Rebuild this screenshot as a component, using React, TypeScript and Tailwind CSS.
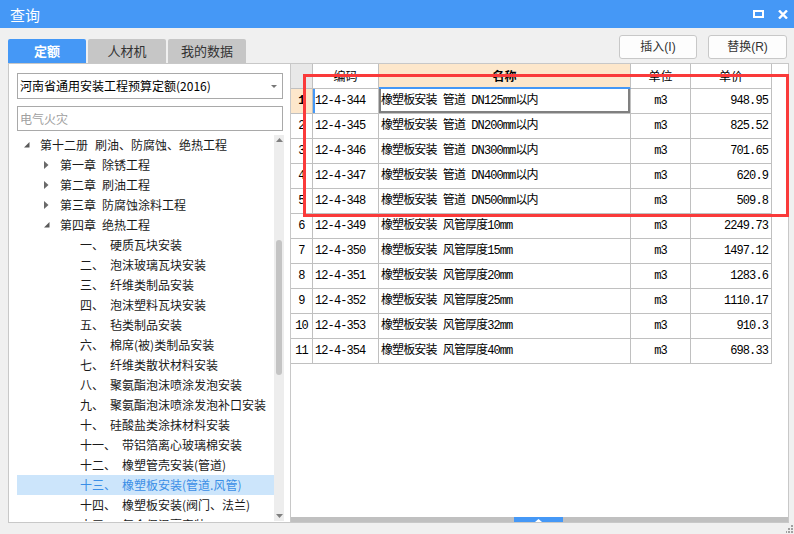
import React from "react";

type TreeItem = {
  level: 0 | 1 | 2;
  label: string;
  name: string;
  icon?: "open" | "closed";
  selected?: boolean;
};

const treeItems: TreeItem[] = [
  { level: 0, label: "第十二册", name: "刷油、防腐蚀、绝热工程", icon: "open" },
  { level: 1, label: "第一章", name: "除锈工程", icon: "closed" },
  { level: 1, label: "第二章", name: "刷油工程", icon: "closed" },
  { level: 1, label: "第三章", name: "防腐蚀涂料工程", icon: "closed" },
  { level: 1, label: "第四章", name: "绝热工程", icon: "open" },
  { level: 2, label: "一、", name: "硬质瓦块安装" },
  { level: 2, label: "二、", name: "泡沫玻璃瓦块安装" },
  { level: 2, label: "三、", name: "纤维类制品安装" },
  { level: 2, label: "四、", name: "泡沫塑料瓦块安装" },
  { level: 2, label: "五、", name: "毡类制品安装" },
  { level: 2, label: "六、", name: "棉席(被)类制品安装" },
  { level: 2, label: "七、", name: "纤维类散状材料安装" },
  { level: 2, label: "八、", name: "聚氨酯泡沫喷涂发泡安装" },
  { level: 2, label: "九、", name: "聚氨酯泡沫喷涂发泡补口安装" },
  { level: 2, label: "十、", name: "硅酸盐类涂抹材料安装" },
  { level: 2, label: "十一、", name: "带铝箔离心玻璃棉安装" },
  { level: 2, label: "十二、", name: "橡塑管壳安装(管道)" },
  { level: 2, label: "十三、", name: "橡塑板安装(管道.风管)", selected: true },
  { level: 2, label: "十四、", name: "橡塑板安装(阀门、法兰)" },
  { level: 2, label: "十五、", name: "复合保温膏安装" },
];

const rows = [
  { code: "12-4-344", name: "橡塑板安装 管道 DN125mm以内", price: "948.95" },
  { code: "12-4-345", name: "橡塑板安装 管道 DN200mm以内", price: "825.52" },
  { code: "12-4-346", name: "橡塑板安装 管道 DN300mm以内", price: "701.65" },
  { code: "12-4-347", name: "橡塑板安装 管道 DN400mm以内", price: "620.9" },
  { code: "12-4-348", name: "橡塑板安装 管道 DN500mm以内", price: "509.8" },
  { code: "12-4-349", name: "橡塑板安装 风管厚度10mm", price: "2249.73" },
  { code: "12-4-350", name: "橡塑板安装 风管厚度15mm", price: "1497.12" },
  { code: "12-4-351", name: "橡塑板安装 风管厚度20mm", price: "1283.6" },
  { code: "12-4-352", name: "橡塑板安装 风管厚度25mm", price: "1110.17" },
  { code: "12-4-353", name: "橡塑板安装 风管厚度32mm", price: "910.3" },
  { code: "12-4-354", name: "橡塑板安装 风管厚度40mm", price: "698.33" },
];

const TreeArrow = ({ kind }: { kind: "open" | "closed" }) =>
  kind === "open" ? (
    <svg width="6" height="6" viewBox="0 0 6 6">
      <polygon points="5.5,0 5.5,5.5 0,5.5" fill="#5a5a5a" />
    </svg>
  ) : (
    <svg width="5" height="8" viewBox="0 0 5 8">
      <polygon points="0,0 4.5,4 0,8" fill="#6a6a6a" />
    </svg>
  );

const App: React.FC = () => {
  return (
    <div className="relative w-[794px] h-[534px] bg-[#f0f0f0] flex flex-col overflow-hidden font-['Noto_Sans_CJK_SC',sans-serif] text-[#1a1a1a]">
      {/* title bar */}
      <div className="h-[28px] shrink-0 bg-[#4598f6] flex items-center justify-between pl-[10px] pr-[6px]">
        <span className="text-white text-[15px] leading-none">查询</span>
        <div className="flex items-center gap-[14px]">
          <svg width="11" height="8" viewBox="0 0 11 8">
            <rect x="1" y="1" width="9" height="6" fill="none" stroke="#fff" strokeWidth="2" />
          </svg>
          <svg width="10" height="9" viewBox="0 0 10 9">
            <path d="M1 0.5 L9 8.5 M9 0.5 L1 8.5" stroke="#fff" strokeWidth="2.4" />
          </svg>
        </div>
      </div>

      {/* body */}
      <div className="flex-1 min-h-0 flex pl-[8px] pr-[5px] pb-[11px]">
        {/* left column */}
        <div className="w-[283px] min-h-0 flex flex-col pt-[11px]">
          <div className="h-[24px] shrink-0 flex gap-[2px]">
            <div className="w-[78px] rounded-t-[2px] bg-[#4598f6] text-white text-[13px] font-bold flex items-center justify-center">
              定额
            </div>
            <div className="w-[78px] rounded-t-[2px] bg-[#c6c6c6] text-[#333] text-[13px] flex items-center justify-center">
              人材机
            </div>
            <div className="w-[78px] rounded-t-[2px] bg-[#c6c6c6] text-[#333] text-[13px] flex items-center justify-center">
              我的数据
            </div>
          </div>
          <div className="flex-1 bg-white border border-[#c8c8c8] flex flex-col pl-[8px] pr-[6px] pt-[9px] pb-[1px] min-h-0">
            <div className="h-[26px] shrink-0 mr-[1px] border border-[#a9a9a9] flex items-center justify-between pl-[2px] pr-[5px] text-[12px] text-black">
              <span>河南省通用安装工程预算定额(2016)</span>
              <svg width="6" height="3" viewBox="0 0 6 3">
                <polygon points="0,0 6,0 3,3" fill="#777" />
              </svg>
            </div>
            <div className="h-[25px] shrink-0 mt-[7px] mr-[1px] border border-[#a9a9a9] flex items-center pl-[2px] text-[12px] text-[#a0a0a0]">
              电气火灾
            </div>
            <div className="flex-1 mt-[4px] flex min-h-0">
              <div className="flex-1 overflow-hidden">
                {treeItems.map((item, i) => {
                  const pad = item.level === 0 ? "pl-[7px]" : item.level === 1 ? "pl-[27px]" : "pl-[63px]";
                  return (
                    <div
                      key={i}
                      className={`h-[20px] flex items-center text-[12px] whitespace-nowrap ${pad} ${
                        item.selected ? "bg-[#cce5fb] text-[#3a8ee6]" : ""
                      }`}
                    >
                      {item.icon && (
                        <span className="w-[16px] flex items-center">
                          <TreeArrow kind={item.icon} />
                        </span>
                      )}
                      <span>{item.label}</span>
                      <span className={item.level === 0 ? "ml-[7px]" : "ml-[6px]"}>{item.name}</span>
                    </div>
                  );
                })}
              </div>
              <div className="w-[10px] bg-[#ededed] flex flex-col items-center">
                <div className="h-[10px] flex items-center justify-center">
                  <svg width="7" height="4" viewBox="0 0 7 4">
                    <polygon points="3.5,0 7,4 0,4" fill="#808080" />
                  </svg>
                </div>
                <div className="h-[95px]" />
                <div className="h-[135px] w-[6px] rounded-[3px] bg-[#c4c4c4]" />
                <div className="flex-1" />
                <div className="h-[10px] flex items-center justify-center">
                  <svg width="7" height="4" viewBox="0 0 7 4">
                    <polygon points="0,0 7,0 3.5,4" fill="#808080" />
                  </svg>
                </div>
              </div>
            </div>
          </div>
        </div>

        {/* right column */}
        <div className="flex-1 min-h-0 flex flex-col pt-[7px]">
          <div className="h-[24px] shrink-0 flex justify-end gap-[11px] pr-[2px]">
            <button className="w-[78px] rounded-[3px] border border-[#c8c8c8] bg-[#fdfdfd] text-[12px] text-[#333] font-['Liberation_Sans','Noto_Sans_CJK_SC',sans-serif]">
              插入(I)
            </button>
            <button className="w-[79px] rounded-[3px] border border-[#c8c8c8] bg-[#fdfdfd] text-[12px] text-[#333] font-['Liberation_Sans','Noto_Sans_CJK_SC',sans-serif]">
              替换(R)
            </button>
          </div>
          <div className="flex-1 mt-[4px] bg-white border border-l-0 border-[#c8c8c8] flex flex-col min-h-0 text-[12px] font-['Liberation_Mono','Noto_Sans_CJK_SC',monospace] tracking-[-0.9px] text-black">
            {/* header */}
            <div className="flex h-[25px] shrink-0">
              <div className="w-[22px] bg-[#e8e8e8] border-r border-b border-[#c0c0c0]" />
              <div className="w-[66px] border-r border-b border-[#c0c0c0] flex items-center justify-center font-['Noto_Sans_CJK_SC',sans-serif] tracking-normal">
                编码
              </div>
              <div className="w-[252px] bg-[#fde7cb] border-r border-b border-r-[#c0c0c0] border-b-[#4598f6] shadow-[inset_0_-1px_0_#4598f6] flex items-center justify-center font-bold font-['Noto_Sans_CJK_SC',sans-serif] tracking-normal">
                名称
              </div>
              <div className="w-[60px] border-r border-b border-[#c0c0c0] flex items-center justify-center font-['Noto_Sans_CJK_SC',sans-serif] tracking-normal">
                单位
              </div>
              <div className="w-[81px] border-r border-b border-[#c0c0c0] flex items-center justify-center font-['Noto_Sans_CJK_SC',sans-serif] tracking-normal">
                单价
              </div>
            </div>
            {rows.map((r, i) => {
              const first = i === 0;
              return (
                <div key={r.code} className="flex h-[25px] shrink-0">
                  <div
                    className={`w-[22px] border-r border-b border-[#c0c0c0] flex items-center justify-center ${
                      first ? "bg-[#fde7cb] font-bold" : ""
                    }`}
                  >
                    {i + 1}
                  </div>
                  <div
                    className={`w-[66px] border-r border-b border-[#c0c0c0] flex items-center pl-[2px] ${
                      first ? "shadow-[inset_2px_0_0_#4598f6]" : ""
                    }`}
                  >
                    {r.code}
                  </div>
                  <div
                    className={`w-[252px] border-r border-b border-[#c0c0c0] flex items-center pl-[2px] whitespace-pre ${
                      first ? "shadow-[inset_2px_0_0_#808080,inset_-2px_0_0_#808080,inset_0_-2px_0_#808080]" : ""
                    }`}
                  >
                    {r.name}
                  </div>
                  <div className="w-[60px] border-r border-b border-[#c0c0c0] flex items-center justify-center">
                    m3
                  </div>
                  <div className="w-[81px] border-r border-b border-[#c0c0c0] flex items-center justify-end pr-[3px]">
                    {r.price}
                  </div>
                </div>
              );
            })}
            <div className="flex-1" />
            <div className="h-[5px] shrink-0 bg-[#c0c0c0] flex">
              <div className="w-[223px]" />
              <div className="w-[49px] bg-[#4598f6] flex items-end justify-center">
                <svg width="7" height="3" viewBox="0 0 7 3">
                  <polygon points="3.5,0 7,3 0,3" fill="#fff" />
                </svg>
              </div>
            </div>
          </div>
        </div>
      </div>

      {/* red annotation box */}
      <div className="absolute left-[303px] top-[74px] w-[486px] h-[143px] border-[3px] border-[#fa3a3a]" />

      {/* resize grip */}
      <svg className="absolute right-0 bottom-[1px]" width="8" height="8" viewBox="0 0 8 8">
        <rect x="5" y="0" width="2" height="2" fill="#a0a0a0" />
        <rect x="2" y="3" width="2" height="2" fill="#a0a0a0" />
        <rect x="5" y="3" width="2" height="2" fill="#a0a0a0" />
        <rect x="-1" y="6" width="2" height="2" fill="#a0a0a0" />
        <rect x="2" y="6" width="2" height="2" fill="#a0a0a0" />
        <rect x="5" y="6" width="2" height="2" fill="#a0a0a0" />
      </svg>
    </div>
  );
};

export default App;
